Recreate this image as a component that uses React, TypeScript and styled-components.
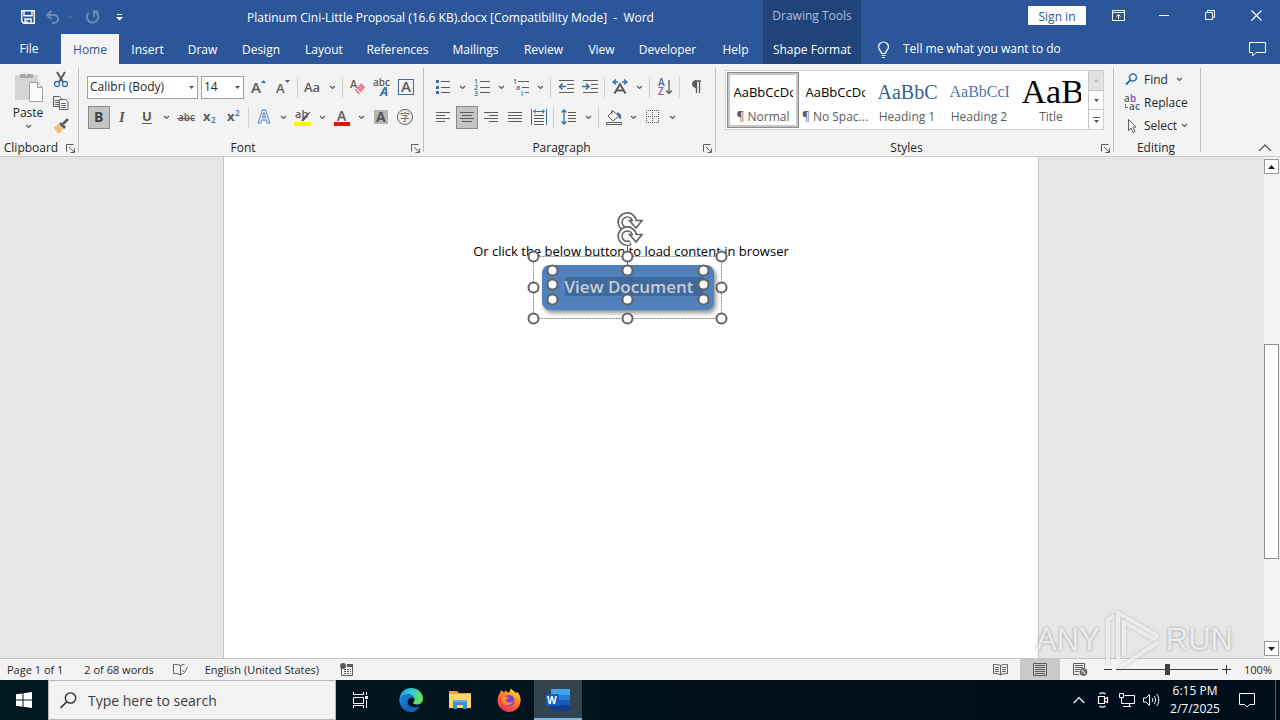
import React from 'react';
import styled, { createGlobalStyle, css } from 'styled-components';

const GlobalStyle = createGlobalStyle`
  *, *::before, *::after { box-sizing: border-box; }
  body { margin: 0; background: #e6e6e6; }
  button, input, select { font: inherit; color: inherit; margin: 0; }
  button { border: 0; padding: 0; background: none; }
  svg { display: block; flex: none; overflow: visible; }
`;

const blue = '#2b579a';
const ink = '#262626';
const accent = '#3a6ea8';
const grey = '#5c5c5c';

/* ---------- shell ---------- */
const Window = styled.div`
  display: flex;
  flex-direction: column;
  min-height: 100vh;
  font-family: 'Open Sans', 'Noto Sans', sans-serif;
  font-size: 12px;
  line-height: 16px;
  color: ${ink};
  position: relative;
`;

/* ---------- header ---------- */
const Header = styled.header`
  display: flex;
  height: 64px;
  background: ${blue};
  color: #fff;
`;
const HeaderBlock = styled.div<{ $grow?: boolean; $dark?: boolean }>`
  display: flex;
  flex-direction: column;
  flex: ${p => (p.$grow ? '1 1 auto' : '0 0 auto')};
  background: ${p => (p.$dark ? '#20437a' : 'transparent')};
`;
const TitleRow = styled.div<{ $end?: boolean }>`
  display: flex;
  align-items: center;
  height: 34px;
  justify-content: ${p => (p.$end ? 'flex-end' : 'flex-start')};
`;
const QuickAccess = styled.div`
  display: flex;
  align-items: center;
  width: 138px;
  padding-left: 20px;
`;
const QuickButton = styled.button<{ $dim?: boolean; $w?: number }>`
  display: grid;
  place-items: center;
  width: ${p => p.$w ?? 18}px;
  height: 24px;
  opacity: ${p => (p.$dim ? 0.3 : 1)};
`;
const DocTitle = styled.h1`
  flex: 1;
  margin: 0;
  font-size: 12px;
  font-weight: 400;
  line-height: 18px;
  padding-top: 2px;
  text-align: center;
  white-space: pre;
`;
const ContextLabel = styled.div`
  height: 34px;
  line-height: 32px;
  text-align: center;
  color: #a9bfe0;
`;
const TabRow = styled.nav`
  display: flex;
  height: 30px;
`;
const Tab = styled.button<{ $w: number; $active?: boolean }>`
  width: ${p => p.$w}px;
  height: 30px;
  padding-top: 2px;
  text-align: center;
  white-space: nowrap;
  ${p => p.$active && css`
    background: #f3f3f3;
    color: ${blue};
  `}
`;
const FileTab = styled(Tab)`
  margin-right: 3px;
  padding-top: 0;
`;
const SignIn = styled.button`
  width: 58px;
  height: 19px;
  margin-right: 9px;
  margin-bottom: 3px;
  border-radius: 1px;
  background: #fff;
  color: ${blue};
  line-height: 21px;
`;
const CaptionBar = styled.div`
  display: flex;
  align-items: center;
  padding-right: 1px;
`;
const CaptionButton = styled.button`
  display: grid;
  place-items: center;
  width: 46px;
  height: 30px;
  margin-bottom: 4px;
`;
const TellMe = styled.label`
  display: flex;
  align-items: center;
  flex: 1;
  gap: 12px;
  padding-left: 15px;
`;
const TellMeInput = styled.input`
  width: 200px;
  padding: 0;
  border: 0;
  outline: 0;
  background: transparent;
  &::placeholder { color: #fff; opacity: 1; }
`;
const CommentButton = styled.button`
  width: 46px;
  display: grid;
  place-items: center;
`;

/* ---------- ribbon ---------- */
const Ribbon = styled.section`
  display: flex;
  height: 93px;
  padding: 4px 0;
  background: #f3f3f3;
  border-bottom: 1px solid #c8c8c8;
`;
const Group = styled.div<{ $w: number }>`
  display: flex;
  flex-direction: column;
  width: ${p => p.$w}px;
  border-right: 1px solid #c0c0c0;
`;
const GroupBody = styled.div<{ $column?: boolean; $left?: number; $top?: number }>`
  display: flex;
  flex: 1;
  flex-direction: ${p => (p.$column ? 'column' : 'row')};
  padding-left: ${p => p.$left ?? 7}px;
  padding-top: ${p => p.$top ?? 0}px;
`;
const GroupFooter = styled.div`
  display: flex;
  align-items: center;
  height: 8px;
  padding-right: 2px;
`;
const GroupLabel = styled.span<{ $shift: boolean }>`
  flex: 1;
  padding-right: ${p => (p.$shift ? 4 : 0)}px;
  text-align: center;
`;
const Launcher = styled.button`
  width: 10px;
  height: 10px;
`;
const PasteButton = styled.button`
  display: flex;
  flex-direction: column;
  align-items: center;
  width: 42px;
  padding-top: 3px;
  gap: 3px;
`;
const ClipColumn = styled.div`
  display: flex;
  flex-direction: column;
  padding-left: 2px;
`;
const SmallButton = styled.button`
  display: grid;
  place-items: center;
  width: 20px;
  height: 23px;
`;
const ToolRow = styled.div`
  display: flex;
  align-items: center;
  height: 30px;
`;
const Tool = styled.button<{ $on?: boolean }>`
  display: grid;
  place-items: center;
  width: 22px;
  height: 23px;
  margin: 0 1px;
  border: 1px solid ${p => (p.$on ? '#8a8a8a' : 'transparent')};
  background: ${p => (p.$on ? '#c5c5c5' : 'transparent')};
`;
const ArrowButton = styled.button`
  display: grid;
  place-items: center;
  width: 15px;
  height: 23px;
`;
const Divider = styled.span`
  width: 1px;
  height: 21px;
  margin: 0 3px 0 2px;
  background: #d4d4d4;
`;
const Combo = styled.div<{ $w: number }>`
  display: grid;
  align-items: center;
  width: ${p => p.$w}px;
  height: 23px;
  margin-right: 3px;
  border: 1px solid #a0a0a0;
  background: #fff;
  & > * { grid-area: 1 / 1; }
  & > svg { justify-self: end; margin-right: 3px; pointer-events: none; }
`;
const ComboSelect = styled.select`
  width: 100%;
  height: 21px;
  padding: 0 2px;
  border: 0;
  outline: 0;
  appearance: none;
  background: transparent;
`;
const Gallery = styled.div`
  display: flex;
  width: 379px;
  height: 60px;
  margin-top: 2px;
  padding-left: 1px;
  border: 1px solid #d0d0d0;
  background: #fff;
`;
const StyleCard = styled.button<{ $on?: boolean }>`
  display: flex;
  flex-direction: column;
  align-items: center;
  width: 72px;
  height: 56px;
  margin-top: 1px;
  padding-top: 3px;
  color: ${grey};
  box-shadow: ${p => (p.$on ? 'inset 0 0 0 1px #8c8c8c, inset 0 0 0 3px #c6c6c6' : 'none')};
`;
const Sample = styled.span<{ $size: number; $serif?: boolean; $color?: string }>`
  display: block;
  width: 59px;
  height: 34px;
  line-height: 34px;
  overflow: hidden;
  white-space: nowrap;
  text-align: left;
  font-family: ${p => (p.$serif ? "'Liberation Serif', serif" : "'Open Sans', sans-serif")};
  font-size: ${p => p.$size}px;
  color: ${p => p.$color ?? '#000'};
`;
const GalleryScroll = styled.div`
  display: flex;
  flex-direction: column;
  width: 15px;
  margin-left: auto;
  border-left: 1px solid #c6c6c6;
`;
const GalleryArrow = styled.button<{ $off?: boolean }>`
  display: grid;
  place-items: center;
  flex: 1;
  background: ${p => (p.$off ? '#e1e1e1' : '#fff')};
  & + & { border-top: 1px solid #c6c6c6; }
`;
const EditButton = styled.button`
  display: flex;
  align-items: center;
  height: 23px;
  gap: 4px;
`;
const CollapseArea = styled.div`
  display: flex;
  flex: 1;
  justify-content: flex-end;
  align-items: flex-end;
  padding-right: 8px;
`;

/* ---------- document ---------- */
const Workspace = styled.main`
  display: flex;
  flex: 1;
  min-height: 501px;
  background: #e6e6e6;
`;
const Canvas = styled.div`
  display: flex;
  flex: 1;
  justify-content: center;
`;
const Sheet = styled.article`
  width: 816px;
  margin-right: 2px;
  padding-top: 85px;
  background: #fff;
  border: solid #c6c6c6;
  border-width: 0 1px;
  display: flex;
  flex-direction: column;
  align-items: center;
`;
const Paragraph = styled.p`
  margin: 0;
  color: #000;
  font-size: 13px;
  line-height: 18px;
`;
const ShapeFrame = styled.div`
  position: relative;
  margin-top: 5px;
  margin-right: 7px;
`;
const ShapeButton = styled.button`
  display: block;
  width: 172px;
  height: 45px;
  border-radius: 8px;
  background: #4f81bd;
  box-shadow: 2px 3px 4px rgba(0, 0, 0, 0.45);
`;
const ShapeText = styled.span`
  display: block;
  width: 138px;
  height: 19px;
  margin-left: 23px;
  margin-bottom: 3px;
  background: #40699c;
  color: #c9ced6;
  font-size: 17px;
  font-weight: 600;
  line-height: 20px;
  text-align: left;
`;
const SelectionOverlay = styled.svg`
  position: absolute;
  left: -16px;
  top: -60px;
  pointer-events: none;
`;
const ScrollBar = styled.div`
  display: flex;
  flex-direction: column;
  width: 16px;
  padding: 2px 1px 2px 0;
  background: #f3f3f3;
`;
const ScrollArrow = styled.button`
  display: grid;
  place-items: center;
  height: 15px;
  border: 1px solid #9a9a9a;
  background: #fff;
`;
const ScrollSpace = styled.div<{ $grow: number }>`
  flex: ${p => p.$grow} 0 0;
`;
const ScrollThumb = styled.div`
  flex: 214 0 0;
  border: 1px solid #8f8f8f;
  background: #fff;
`;

/* ---------- status bar ---------- */
const StatusBar = styled.footer`
  display: flex;
  align-items: center;
  height: 22px;
  padding: 0 8px 0 7px;
  border-top: 1px solid #c6c6c6;
  background: #f3f3f3;
  font-size: 11px;
`;
const StatusItem = styled.button<{ $gap: number }>`
  margin-right: ${p => p.$gap}px;
  white-space: nowrap;
`;
const StatusRight = styled.div`
  display: flex;
  align-items: center;
  margin-left: auto;
`;
const ViewButton = styled.button<{ $on?: boolean }>`
  display: grid;
  place-items: center;
  width: 40px;
  height: 21px;
  background: ${p => (p.$on ? '#c8c8c8' : 'transparent')};
`;
const ZoomButton = styled.button`
  display: grid;
  place-items: center;
  width: 16px;
  height: 20px;
`;
const ZoomSlider = styled.input`
  width: 102px;
  height: 20px;
  appearance: none;
  background: linear-gradient(#444, #444) center / 100% 1px no-repeat;
  &::-webkit-slider-thumb {
    appearance: none;
    width: 5px;
    height: 11px;
    background: #404040;
  }
`;
const ZoomValue = styled.button`
  width: 38px;
  text-align: right;
`;

/* ---------- taskbar ---------- */
const Taskbar = styled.footer`
  display: flex;
  height: 40px;
  background: linear-gradient(90deg, #011822, #000c1a);
  color: #fff;
`;
const TaskButton = styled.button<{ $on?: boolean; $w?: number }>`
  display: grid;
  place-items: center;
  width: ${p => p.$w ?? 48}px;
  margin-right: 1px;
  background: ${p => (p.$on ? '#33444f' : 'transparent')};
  border-bottom: 2px solid ${p => (p.$on ? '#76b9ed' : 'transparent')};
  border-top: 2px solid transparent;
`;
const SearchBox = styled.label`
  display: flex;
  align-items: center;
  width: 288px;
  padding-left: 11px;
  gap: 11px;
  border: 1px solid #b9b9b9;
  background: #f2f2f2;
  color: #1f1f1f;
  font-size: 14px;
`;
const SearchInput = styled.input`
  flex: 1;
  min-width: 0;
  padding: 2px 0 0;
  border: 0;
  outline: 0;
  background: transparent;
  &::placeholder { color: #3a3a3a; opacity: 1; }
`;
const Tray = styled.div`
  display: flex;
  align-items: center;
  margin-left: auto;
`;
const TrayButton = styled.button<{ $w?: number }>`
  display: grid;
  place-items: center;
  width: ${p => p.$w ?? 24}px;
  height: 40px;
`;
const Clock = styled.button`
  width: 64px;
  line-height: 18px;
  text-align: center;
`;
const DesktopEdge = styled.span`
  width: 5px;
  height: 40px;
  margin-left: 8px;
  border-left: 1px solid #4d5863;
`;
const Watermark = styled.div`
  position: absolute;
  right: 47px;
  bottom: 48px;
  display: flex;
  align-items: center;
  gap: 4px;
  pointer-events: none;
  font-family: 'Liberation Sans', sans-serif;
  font-size: 31px;
  line-height: 64px;
  color: rgba(255, 255, 255, 0.75);
  text-shadow: 0 0 3px rgba(0, 0, 0, 0.35);
`;
const WatermarkLogo = styled.svg`
  filter: drop-shadow(0 0 1px rgba(0, 0, 0, 0.3));
`;

/* ---------- icons ---------- */
type IconProps = { w?: number; h?: number; children: React.ReactNode };
const Icon = ({ w = 16, h = 16, children }: IconProps) => (
  <svg width={w} height={h} viewBox={`0 0 ${w} ${h}`} fill="none" stroke={grey} aria-hidden="true">
    {children}
  </svg>
);
const Glyph = ({ x = 0, y, size, fill = grey, weight = 400, family = 'Open Sans', italic, stroke = 'none', children }: {
  x?: number; y: number; size: number; fill?: string; weight?: number; family?: string; italic?: boolean; stroke?: string; children: string;
}) => (
  <text x={x} y={y} fontSize={size} fill={fill} stroke={stroke} fontWeight={weight} fontFamily={`'${family}', sans-serif`} fontStyle={italic ? 'italic' : 'normal'}>
    {children}
  </text>
);
const Chevron = () => (
  <Icon w={7} h={5}><path d="M1 1l2.500 2.500L6 1" strokeWidth="1.200" /></Icon>
);
const Caret = ({ color = '#555' }: { color?: string }) => (
  <Icon w={5} h={3}><path d="M0 0h5L2.500 3z" fill={color} stroke="none" /></Icon>
);
const LauncherIcon = () => (
  <Icon w={9} h={9}><path d="M.5 7.500V.5h7M3 3l5 5M8.500 4.500v4h-4" /></Icon>
);
const lines = (rows: [number, number, number][]) => (
  <path d={rows.map(([x, y, w]) => `M${x} ${y}.5h${w}`).join('')} />
);

const tabs = [
  { name: 'Home', w: 58, active: true },
  { name: 'Insert', w: 57 },
  { name: 'Draw', w: 53 },
  { name: 'Design', w: 64 },
  { name: 'Layout', w: 62 },
  { name: 'References', w: 85 },
  { name: 'Mailings', w: 71 },
  { name: 'Review', w: 65 },
  { name: 'View', w: 51 },
  { name: 'Developer', w: 81 },
  { name: 'Help', w: 55 },
];

const styleCards = [
  { sample: 'AaBbCcDc', name: '¶ Normal', size: 13, on: true },
  { sample: 'AaBbCcDc', name: '¶ No Spac...', size: 13 },
  { sample: 'AaBbC', name: 'Heading 1', size: 20, serif: true, color: '#365f91' },
  { sample: 'AaBbCcI', name: 'Heading 2', size: 16, serif: true, color: '#4f76a8' },
  { sample: 'AaB', name: 'Title', size: 34, serif: true },
];

const TitleBar = () => (
  <Header>
    <HeaderBlock>
      <TitleRow>
        <QuickAccess>
          <QuickButton aria-label="Save">
            <Icon w={14} h={14}><path d="M.7.7h12.600v12.600H2.700L.7 11.300zM3 .7v5h8v-5M4 13V9h6v4M6 10.500v2.500" stroke="#fff" strokeWidth="1.400" /></Icon>
          </QuickButton>
          <QuickButton aria-label="Undo" $dim $w={50}>
            <Icon w={28} h={14}>
              <path d="M5.500 1L1 5l4.500 4M1.500 5H8a4 4 0 010 8H6" stroke="#fff" strokeWidth="2" />
              <path d="M22 5.500l2.500 2.500L27 5.500" stroke="#fff" />
            </Icon>
          </QuickButton>
          <QuickButton aria-label="Repeat" $dim>
            <Icon w={14} h={14}><path d="M9.500 1.500A5.700 5.700 0 113.700 2.700M9 7V1.500h4.500" stroke="#fff" strokeWidth="2" /></Icon>
          </QuickButton>
          <QuickButton aria-label="Customize Quick Access Toolbar" $w={40}>
            <Icon w={7} h={7}><path d="M1 .5h5" stroke="#fff" /><path d="M0 3h7L3.500 6.500z" fill="#fff" stroke="none" /></Icon>
          </QuickButton>
        </QuickAccess>
        <DocTitle>{'Platinum Cini-Little Proposal (16.6 KB).docx [Compatibility Mode]  -  Word'}</DocTitle>
      </TitleRow>
      <TabRow>
        <FileTab $w={58}>File</FileTab>
        {tabs.map(t => <Tab key={t.name} $w={t.w} $active={t.active}>{t.name}</Tab>)}
      </TabRow>
    </HeaderBlock>
    <HeaderBlock $dark>
      <ContextLabel>Drawing Tools</ContextLabel>
      <Tab $w={98}>Shape Format</Tab>
    </HeaderBlock>
    <HeaderBlock $grow>
      <TitleRow $end>
        <SignIn>Sign in</SignIn>
        <CaptionBar>
          <CaptionButton aria-label="Ribbon display options">
            <Icon w={13} h={11}><path d="M.5.5h12v10H.5zM.5 2.500h12M6.500 9V4.500M4.500 6.500l2-2 2 2" stroke="#fff" /></Icon>
          </CaptionButton>
          <CaptionButton aria-label="Minimize"><Icon w={10} h={10}><path d="M0 5.500h10" stroke="#fff" /></Icon></CaptionButton>
          <CaptionButton aria-label="Restore">
            <Icon w={10} h={10}><path d="M.5 2.500h7v7h-7zM2.500 2.500v-2h7v7h-2" stroke="#fff" /></Icon>
          </CaptionButton>
          <CaptionButton aria-label="Close"><Icon w={11} h={11}><path d="M.5.5l10 10M10.500.5l-10 10" stroke="#fff" strokeWidth="1.200" /></Icon></CaptionButton>
        </CaptionBar>
      </TitleRow>
      <TabRow>
        <TellMe>
          <Icon w={15} h={17}><path d="M5.500 12.500c0-3-3-3.500-3-6.500a5 5 0 0110 0c0 3-3 3.500-3 6.500zM5.500 14.500h4M6 16.500h3" stroke="#fff" strokeWidth="1.200" /></Icon>
          <TellMeInput aria-label="Tell me what you want to do" placeholder="Tell me what you want to do" />
        </TellMe>
        <CommentButton aria-label="Comments">
          <Icon w={17} h={15}><path d="M.5.5h16v10H7l-3.500 3.500v-3.500h-3z" stroke="#fff" /></Icon>
        </CommentButton>
      </TabRow>
    </HeaderBlock>
  </Header>
);

const Footer = ({ label, launcher = true }: { label: string; launcher?: boolean }) => (
  <GroupFooter>
    <GroupLabel $shift={launcher}>{label}</GroupLabel>
    {launcher && <Launcher aria-label={`${label} settings`}><LauncherIcon /></Launcher>}
  </GroupFooter>
);
const More = ({ label }: { label: string }) => <ArrowButton aria-label={label}><Chevron /></ArrowButton>;

const ClipboardGroup = () => (
  <Group $w={79}>
    <GroupBody>
      <PasteButton>
        <Icon w={30} h={31}>
          <path d="M2 4h23v25H2z" fill="#d6d4d6" stroke="none" />
          <path d="M7 3h4a3 3 0 015 0h4v4H7z" fill="#a9a9a9" stroke="none" />
          <circle cx="13.500" cy="3" r="1.200" fill="#f3f3f3" stroke="none" />
          <path d="M16.500 11.500h8l5 5v14h-13zM24.500 11.500v5h5" fill="#fafafa" stroke="#a0a0a0" />
        </Icon>
        <span>Paste</span>
        <Chevron />
      </PasteButton>
      <ClipColumn>
        <SmallButton aria-label="Cut">
          <Icon>
            <path d="M4 0l6 10M12 0L6 10" strokeWidth="2" />
            <circle cx="4" cy="12" r="2.500" stroke={accent} strokeWidth="1.300" /><circle cx="12" cy="12" r="2.500" stroke={accent} strokeWidth="1.300" />
          </Icon>
        </SmallButton>
        <SmallButton aria-label="Copy">
          <Icon>
            <path d="M.5 1.500h6l2 2v8h-8zM2 5.500h4M2 7.500h4M2 9.500h4" />
            <path d="M6.500 4.500h6l2.500 2.500v7.500H6.500z" fill="#fff" /><path d="M8 8.500h5M8 10.500h5M8 12.500h5" stroke={accent} />
          </Icon>
        </SmallButton>
        <SmallButton aria-label="Format Painter">
          <Icon>
            <path d="M1 9l5-3 4 5-4 5C4 14 2 12 1 9z" fill="#f0c070" stroke="none" />
            <path d="M6 6l2-2 5 5-2 2z" fill={grey} stroke="none" /><path d="M10 6l5-5" strokeWidth="2.500" />
          </Icon>
        </SmallButton>
      </ClipColumn>
    </GroupBody>
    <Footer label="Clipboard" />
  </Group>
);

const FontGroup = () => (
  <Group $w={345}>
    <GroupBody $column $left={8} $top={4}>
      <ToolRow>
        <Combo $w={111}>
          <ComboSelect aria-label="Font"><option>Calibri (Body)</option></ComboSelect><Caret />
        </Combo>
        <Combo $w={43}>
          <ComboSelect aria-label="Font size"><option>14</option></ComboSelect><Caret />
        </Combo>
        <Tool aria-label="Increase font size"><Icon><Glyph x={0} y={14} size={15} weight={600}>A</Glyph><path d="M10 4l2.500-3L15 4z" fill={accent} stroke="none" /></Icon></Tool>
        <Tool aria-label="Decrease font size"><Icon><Glyph x={1} y={14} size={13} weight={600}>A</Glyph><path d="M10 1h5l-2.500 3z" fill={grey} stroke="none" /></Icon></Tool>
        <Divider />
        <Tool aria-label="Change case"><Icon w={18}><Glyph y={13} size={13} weight={600}>Aa</Glyph></Icon></Tool>
        <More label="Case options" />
        <Divider />
        <Tool aria-label="Clear formatting">
          <Icon><Glyph x={0} y={9} size={11} weight={600}>A</Glyph><path d="M11 4l4.500 4-6.500 7.500L4.500 11z" fill="#e8879b" stroke="none" /><path d="M5.500 9l5.500 5" stroke="#fff" /></Icon>
        </Tool>
        <Tool aria-label="Phonetic guide"><Icon><Glyph x={-1} y={7} size={10} weight={600}>abc</Glyph><Glyph x={6} y={17} size={13} weight={700} italic fill={accent}>A</Glyph></Icon></Tool>
        <Tool aria-label="Character border"><Icon><rect x=".5" y=".5" width="15" height="15" stroke={accent} /><Glyph x={3} y={13} size={15} weight={600}>A</Glyph></Icon></Tool>
      </ToolRow>
      <ToolRow>
        <Tool $on aria-label="Bold"><Icon><Glyph x={3} y={13} size={14} weight={700} fill="#444">B</Glyph></Icon></Tool>
        <Tool aria-label="Italic"><Icon><Glyph x={4} y={13} size={15} family="Liberation Serif" weight={700} italic>I</Glyph></Icon></Tool>
        <Tool aria-label="Underline"><Icon><Glyph x={3} y={12} size={13} weight={700}>U</Glyph><path d="M3 14.500h10" /></Icon></Tool>
        <More label="Underline options" />
        <Tool aria-label="Strikethrough"><Icon w={18}><Glyph x={1} y={12} size={10} weight={600}>abc</Glyph><path d="M0 9.500h18" /></Icon></Tool>
        <Tool aria-label="Subscript"><Icon><Glyph x={1} y={12} size={13} weight={700}>x</Glyph><Glyph x={9} y={14} size={8} weight={600} fill={accent}>2</Glyph></Icon></Tool>
        <Tool aria-label="Superscript"><Icon><Glyph x={1} y={12} size={13} weight={700}>x</Glyph><Glyph x={9} y={7} size={8} weight={600} fill={accent}>2</Glyph></Icon></Tool>
        <Divider />
        <Tool aria-label="Text effects"><Icon><Glyph x={2} y={14} size={17} weight={700} fill="#f3f8ff" stroke="#5b8fd0">A</Glyph></Icon></Tool>
        <More label="Text effects options" />
        <Tool aria-label="Highlight">
          <Icon w={18}><rect x="0" y="13" width="17" height="4" fill="#fff200" stroke="none" /><Glyph x={1} y={9} size={11} weight={600}>ab</Glyph><path d="M16 3l-6 8-2 1 1-3z" fill={grey} /></Icon>
        </Tool>
        <More label="Highlight options" />
        <Tool aria-label="Font color"><Icon><Glyph x={3} y={12} size={14} weight={600}>A</Glyph><rect x="0" y="13" width="16" height="4" fill="#e81010" stroke="none" /></Icon></Tool>
        <More label="Font color options" />
        <Tool aria-label="Character shading"><Icon><rect x="1" y="1" width="14" height="14" fill="#b5b5b5" stroke="none" /><Glyph x={3} y={13} size={14} weight={700} fill="#555">A</Glyph></Icon></Tool>
        <Tool aria-label="Enclose characters"><Icon><circle cx="8" cy="8" r="7.500" /><Glyph x={3} y={12} size={10} family="Noto Sans CJK SC">字</Glyph></Icon></Tool>
      </ToolRow>
    </GroupBody>
    <Footer label="Font" />
  </Group>
);

const ParagraphGroup = () => (
  <Group $w={292}>
    <GroupBody $column $top={4}>
      <ToolRow>
        <Tool aria-label="Bullets"><Icon>{lines([[6, 2, 9], [6, 8, 9], [6, 13, 9]])}<path d="M1 1h3v3H1zM1 7h3v3H1zM1 12h3v3H1z" fill={accent} stroke="none" /></Icon></Tool>
        <More label="Bullet options" />
        <Tool aria-label="Numbering"><Icon>{lines([[6, 2, 10], [6, 8, 10], [6, 13, 10]])}<Glyph y={5} size={7} weight={600} fill={accent}>1</Glyph><Glyph y={11} size={7} weight={600} fill={accent}>2</Glyph><Glyph y={17} size={7} weight={600} fill={accent}>3</Glyph></Icon></Tool>
        <More label="Numbering options" />
        <Tool aria-label="Multilevel list"><Icon>{lines([[5, 2, 11], [9, 8, 7], [12, 13, 4]])}<Glyph y={5} size={7} weight={600} fill={accent}>1</Glyph><Glyph x={3} y={11} size={7} weight={600} fill={accent}>a</Glyph><Glyph x={8} y={17} size={7} weight={600} fill={accent}>i</Glyph></Icon></Tool>
        <More label="Multilevel options" />
        <Divider />
        <Tool aria-label="Decrease indent"><Icon>{lines([[1, 1, 15], [9, 5, 7], [9, 9, 7], [1, 13, 15]])}<path d="M8 7.500H2M4.500 4.500l-3 3 3 3" stroke={accent} strokeWidth="1.600" /></Icon></Tool>
        <Tool aria-label="Increase indent"><Icon>{lines([[1, 1, 15], [9, 5, 7], [9, 9, 7], [1, 13, 15]])}<path d="M0 7.500h6M4 4.500l3 3-3 3" stroke={accent} strokeWidth="1.600" /></Icon></Tool>
        <Divider />
        <Tool aria-label="Asian layout"><Icon><path d="M4 .5L1 3l3 2.500M12 .5L15 3l-3 2.500M1 3h5M15 3h-5" stroke={accent} strokeWidth="1.300" /><path d="M2.500 14.500L8 5l5.500 9.500M4.500 11.500h7" strokeWidth="2" /></Icon></Tool>
        <More label="Asian layout options" />
        <Divider />
        <Tool aria-label="Sort"><Icon><Glyph x={1} y={7} size={10} weight={600} fill={accent}>A</Glyph><Glyph x={1} y={16} size={10} weight={600} fill="#8a4fb0">Z</Glyph><path d="M12 1v13M9 11.500l3 3 3-3" strokeWidth="1.300" /></Icon></Tool>
        <Divider />
        <Tool aria-label="Show marks"><Icon><path d="M8 2h6M9.500 2v12M12.500 2v12" strokeWidth="1.300" /><path d="M9 1.500v7a3.500 3.500 0 010-7z" fill={grey} /></Icon></Tool>
      </ToolRow>
      <ToolRow>
        <Tool aria-label="Align left"><Icon>{lines([[1, 3, 14], [1, 6, 9], [1, 9, 14], [1, 12, 9]])}</Icon></Tool>
        <Tool $on aria-label="Center"><Icon>{lines([[1, 3, 14], [3, 6, 10], [1, 9, 14], [3, 12, 10]])}</Icon></Tool>
        <Tool aria-label="Align right"><Icon>{lines([[1, 3, 14], [6, 6, 9], [1, 9, 14], [6, 12, 9]])}</Icon></Tool>
        <Tool aria-label="Justify"><Icon>{lines([[1, 3, 14], [1, 6, 14], [1, 9, 14], [1, 12, 14]])}</Icon></Tool>
        <Tool aria-label="Distribute"><Icon><path d="M.5 0v16M15.500 0v16M2.500 2.500h11M5 .5l-2.500 2L5 4.500M11 .5l2.500 2-2.500 2" stroke={accent} />{lines([[3, 6, 10], [3, 9, 10], [3, 12, 10], [3, 15, 10]])}</Icon></Tool>
        <Divider />
        <Tool aria-label="Line spacing"><Icon>{lines([[7, 3, 8], [7, 6, 8], [7, 9, 8], [7, 12, 8]])}<path d="M3 1v14M.5 3.500L3 1l2.500 2.500M.5 12.500L3 15l2.500-2.500" stroke={accent} strokeWidth="1.300" /></Icon></Tool>
        <More label="Line spacing options" />
        <Divider />
        <Tool aria-label="Shading"><Icon><path d="M7 2l6 5-6 5-5-5zM6 1v4" /><path d="M11 4c3 0 4 2 3.500 6l-2-3z" fill={accent} stroke={accent} /><path d="M.5 13.500h15v2H.5z" fill="#fff" /></Icon></Tool>
        <More label="Shading options" />
        <Tool aria-label="Borders"><Icon><path d="M1.500 1v13M7.500 1v13M13.500 1v13M1 1.500h13M1 7.500h13M1 13.500h13" strokeDasharray="1 1" /></Icon></Tool>
        <More label="Border options" />
      </ToolRow>
    </GroupBody>
    <Footer label="Paragraph" />
  </Group>
);

const StylesGroup = () => (
  <Group $w={398}>
    <GroupBody $left={9}>
      <Gallery>
        {styleCards.map(s => (
          <StyleCard key={s.name} $on={s.on}>
            <Sample $size={s.size} $serif={s.serif} $color={s.color}>{s.sample}</Sample>
            <span>{s.name}</span>
          </StyleCard>
        ))}
        <GalleryScroll>
          <GalleryArrow $off aria-label="Scroll styles up"><Icon w={5} h={3}><path d="M0 3h5L2.500 0z" fill="#b5b5b5" stroke="none" /></Icon></GalleryArrow>
          <GalleryArrow aria-label="Scroll styles down"><Caret /></GalleryArrow>
          <GalleryArrow aria-label="More styles"><Icon w={7} h={6}><path d="M0 .5h7" /><path d="M1 3h5L3.500 6z" fill="#555" stroke="none" /></Icon></GalleryArrow>
        </GalleryScroll>
      </Gallery>
    </GroupBody>
    <Footer label="Styles" />
  </Group>
);

const EditingGroup = () => (
  <Group $w={87}>
    <GroupBody $column $left={10}>
      <EditButton>
        <Icon><circle cx="9" cy="5.500" r="3.500" stroke={accent} strokeWidth="1.600" /><path d="M6.500 8L2 12.500" stroke={accent} strokeWidth="2" /></Icon>
        <span>Find</span>
        <ArrowButton as="span"><Chevron /></ArrowButton>
      </EditButton>
      <EditButton>
        <Icon><Glyph x={0} y={7} size={10} weight={600}>a</Glyph><Glyph x={6} y={7} size={10} weight={600} fill="#8a4fb0">b</Glyph><Glyph x={5} y={15} size={10} weight={600}>a</Glyph><Glyph x={11} y={15} size={10} weight={600} fill={accent}>c</Glyph><path d="M1.500 9v3.500H4" stroke={accent} /></Icon>
        <span>Replace</span>
      </EditButton>
      <EditButton>
        <Icon><path d="M4.500 1.500v11l2.500-2.500 2 4.500 2-1-2-4.500h3z" fill="#fff" /></Icon>
        <span>Select</span>
        <Chevron />
      </EditButton>
    </GroupBody>
    <Footer label="Editing" launcher={false} />
  </Group>
);

const handleRing = (x: number, y: number, r: number) => (
  <circle key={`${x}-${y}`} cx={x} cy={y} r={r} fill="#fff" stroke="#636363" strokeWidth="2" />
);
const rotateHandle = (y: number) => (
  <g key={y} transform={`translate(0 ${y})`} fill="none">
    <path d="M104.500 6.500A7.200 7.200 0 11108.500 0" stroke="#636363" strokeWidth="5.500" />
    <path d="M103.500 -1.500h12.500l-6 7.500z" fill="#fff" stroke="#636363" strokeWidth="1.600" />
    <path d="M103.700 7A7.200 7.200 0 11108.500 0.500" stroke="#fff" strokeWidth="2.400" />
  </g>
);

const DocumentArea = () => (
  <Workspace>
    <Canvas>
      <Sheet>
        <Paragraph>Or click the below button to load content in browser</Paragraph>
        <ShapeFrame>
          <ShapeButton><ShapeText>View Document</ShapeText></ShapeButton>
          <SelectionOverlay width="220" height="130" viewBox="0 0 220 130">
            <rect x="7.500" y="51.500" width="188" height="62" fill="none" stroke="#8a8a8a" strokeDasharray="2 1" />
            <rect x="26.500" y="65.500" width="151" height="29" fill="none" stroke="#5c6f8c" strokeDasharray="2 1" />
            <path d="M101.500 36v30" stroke="#636363" />
            {[7, 101, 195].flatMap(x => [51, 82, 113].filter(y => !(x === 101 && y === 82)).map(y => handleRing(x + 0.5, y + 0.5, 5)))}
            {[26, 101, 177].flatMap(x => [65, 79, 94].filter(y => !(x === 101 && y === 79)).map(y => handleRing(x + 0.5, y + 0.5, 5)))}
            {[17, 31].map(rotateHandle)}
          </SelectionOverlay>
        </ShapeFrame>
      </Sheet>
    </Canvas>
    <ScrollBar>
      <ScrollArrow aria-label="Scroll up"><Icon w={7} h={4}><path d="M0 4h7L3.500 0z" fill="#222" stroke="none" /></Icon></ScrollArrow>
      <ScrollSpace $grow={171} />
      <ScrollThumb />
      <ScrollSpace $grow={82} />
      <ScrollArrow aria-label="Scroll down"><Icon w={7} h={4}><path d="M0 0h7L3.500 4z" fill="#222" stroke="none" /></Icon></ScrollArrow>
    </ScrollBar>
  </Workspace>
);

const Status = () => (
  <StatusBar>
    <StatusItem $gap={21}>Page 1 of 1</StatusItem>
    <StatusItem $gap={19}>2 of 68 words</StatusItem>
    <StatusItem $gap={17} aria-label="Proofing">
      <Icon w={15} h={14}><path d="M7.500 2.500c-2-1-4-1-7-1v9c3 0 5 0 7 1.500V2.500c2-1 3-1 4-1M7.500 12c1-1 2-1.500 3-1.500M9 7l2.500 2.500L14.500 4" /></Icon>
    </StatusItem>
    <StatusItem $gap={21}>English (United States)</StatusItem>
    <StatusItem $gap={0} aria-label="Macro recording">
      <Icon w={14} h={13}><path d="M1.500 5v7.500h11v-10H7" /><path d="M4 6.500h7M4 8.500h7M4 10.500h7" strokeDasharray="2 1" /><path d="M7 1h6v3H7z" fill={grey} stroke="none" /><circle cx="3" cy="3" r="3" fill={grey} stroke="none" /></Icon>
    </StatusItem>
    <StatusRight>
      <ViewButton aria-label="Read mode">
        <Icon w={15} h={13}><path d="M7.500 2.500c-2-1-4-1-7-1v9c3 0 5 0 7 1.500 2-1.500 4-1.500 7-1.500v-9c-3 0-5 0-7 1zV12M2 4.500h4M2 6.500h4M2 8.500h4M9 4.500h4M9 6.500h4M9 8.500h4" /></Icon>
      </ViewButton>
      <ViewButton $on aria-label="Print layout"><Icon w={14} h={13}><path d="M.5.5h13v12H.5zM2 2.500h10M2 4.500h10M2 6.500h10M2 8.500h10M2 10.500h10" /></Icon></ViewButton>
      <ViewButton aria-label="Web layout">
        <Icon w={15} h={13}><path d="M6 11.500H.5V.5h11V5M2 2.500h8M2 4.500h8M2 6.500h5M2 8.500h4" /><circle cx="10.500" cy="9" r="3.500" fill="#777" /><path d="M8.500 7.500l2 1 1.500 2.500" stroke="#fff" /></Icon>
      </ViewButton>
      <ZoomButton aria-label="Zoom out"><Icon w={9} h={9}><path d="M0 4.500h8" stroke="#333" /></Icon></ZoomButton>
      <ZoomSlider type="range" min={0} max={200} defaultValue={100} aria-label="Zoom" />
      <ZoomButton aria-label="Zoom in"><Icon w={9} h={9}><path d="M0 4.500h9M4.500 0v9" stroke="#333" /></Icon></ZoomButton>
      <ZoomValue>100%</ZoomValue>
    </StatusRight>
  </StatusBar>
);

const TaskbarArea = () => (
  <Taskbar>
    <TaskButton aria-label="Start" $w={47}>
      <Icon><path d="M0 2.300L6.500 1.400V7.600H0zM7.500 1.200L16 0v7.600H7.500zM0 8.500h6.500v6.200L0 13.800zM7.500 8.500H16V16l-8.500-1.200z" fill="#fff" stroke="none" /></Icon>
    </TaskButton>
    <SearchBox>
      <Icon w={17} h={17}><circle cx="10.500" cy="6" r="5.200" stroke="#222" strokeWidth="1.300" /><path d="M6.500 10L.5 16" stroke="#222" strokeWidth="1.500" /></Icon>
      <SearchInput aria-label="Type here to search" placeholder="Type here to search" />
    </SearchBox>
    <TaskButton aria-label="Task view" $w={50}>
      <Icon w={17} h={16}><path d="M.5 0v2.500h10V0M.5 5.500h10v6H.5zM.5 16v-2.500h10V16M13.500 0v3M13.500 8v8" stroke="#fff" /><path d="M12 4h3v3h-3z" fill="#fff" stroke="none" /></Icon>
    </TaskButton>
    <TaskButton aria-label="Microsoft Edge">
      <svg width="24" height="24" viewBox="0 0 24 24" aria-hidden="true">
        <defs>
          <linearGradient id="edgeTop" x1="0" y1="0" x2="1" y2="0.300"><stop offset="0" stopColor="#1b9de2" /><stop offset="0.500" stopColor="#30c6d8" /><stop offset="1" stopColor="#66e05a" /></linearGradient>
          <linearGradient id="edgeLow" x1="0" y1="0" x2="1" y2="1"><stop offset="0" stopColor="#1b88dd" /><stop offset="1" stopColor="#0c4a9c" /></linearGradient>
        </defs>
        <path d="M.5 11C1 4.500 6 0 12 0c7 0 12 5 12 10.500 0 4-3 6-6 6-2.500 0-4-1-4-1.500 0-.7 1.500-1 1.500-3.500C15.500 9 12.500 6.500 9 6.500c-4 0-7 2-8.500 4.500z" fill="url(#edgeTop)" />
        <path d="M.3 11C1.500 8.500 5 6.500 9 6.500c3 0 5.500 2 6 4-4-2-6.500 1-6.500 4 0 4.500 6 6.500 12 4C18.500 22 15.500 24 12 24 5 24 0 18 .3 11z" fill="url(#edgeLow)" />
        <path d="M9 13c-1.500 5 5 8 11.500 5.500C18.500 22 15 24 12 24c-5-2-6-8-3-11z" fill="#1565b8" />
      </svg>
    </TaskButton>
    <TaskButton aria-label="File Explorer">
      <svg width="22" height="20" viewBox="0 0 22 20" aria-hidden="true">
        <path d="M0 1h8l2 2h12v5H0z" fill="#e8a33a" /><path d="M0 4h22v14H0z" fill="#fbd66b" />
        <path d="M4 10h14v9h-4v-4H8v4H4z" fill="#3a8fd0" /><path d="M4 10h14v2H4z" fill="#5ab0e8" />
      </svg>
    </TaskButton>
    <TaskButton aria-label="Firefox">
      <svg width="24" height="24" viewBox="0 0 24 24" aria-hidden="true">
        <defs><linearGradient id="fox" x1="0.800" y1="0" x2="0.200" y2="1"><stop offset="0" stopColor="#ffe226" /><stop offset="0.450" stopColor="#ff7a2a" /><stop offset="1" stopColor="#e6215e" /></linearGradient></defs>
        <path d="M3 5l1-3 3 2.500 2-2.500 1 2.500c2 0 3-.5 3.500-4C16 2 18 4 19 5l1.500-1C23 7 24 10 23.500 13.500 23 19.500 18 24 12 24S.5 19 .5 12.500C.5 9.500 1.500 7 3 5z" fill="url(#fox)" />
        <circle cx="12" cy="12.500" r="5.500" fill="#7a42d8" /><path d="M5 9c3-1 5 0 7 0-1 2-3 2-3 4 2 2 5 2 7 0-1 5-9 6-11 0-1-2-1-3 0-4z" fill="#ff8a2a" />
      </svg>
    </TaskButton>
    <TaskButton $on aria-label="Word">
      <svg width="24" height="22" viewBox="0 0 24 22" aria-hidden="true">
        <path d="M5 0h19v6H5z" fill="#41a5ee" /><path d="M5 6h19v5H5z" fill="#2b7cd3" /><path d="M5 11h19v5H5z" fill="#185abd" /><path d="M5 16h19v6H5z" fill="#103f91" />
        <rect x="0" y="5" width="13" height="12" rx="1" fill="#185abd" /><Glyph x={1} y={15} size={10} weight={700} fill="#fff">W</Glyph>
      </svg>
    </TaskButton>
    <Tray>
      <TrayButton aria-label="Show hidden icons"><Icon w={12} h={8}><path d="M.7 7L6 1.500 11.300 7" stroke="#fff" strokeWidth="1.200" /></Icon></TrayButton>
      <TrayButton aria-label="Meet now"><Icon w={14} h={16}><path d="M2.500 4.500h6v7h-6zM8.500 7l3-1.500v5L8.500 9M3.500 2c2-1.500 4-1.500 6 0M3.500 14c2 1.500 4 1.500 6 0" stroke="#fff" strokeWidth="1.200" /></Icon></TrayButton>
      <TrayButton aria-label="Network"><Icon w={16} h={14}><path d="M5.500 2.500h10v8h-10M4 13.500h8M10.500 10.500v3M.5.5h4v4h-4zM2.500 4.500v6h3" stroke="#fff" /></Icon></TrayButton>
      <TrayButton aria-label="Volume"><Icon w={17} h={14}><path d="M.5 5h2.500L6.500 1.500v11L3 9H.5zM9 5c1 1 1 3 0 4M11 3c2 2 2 6 0 8M13.500 1c3 3 3 9 0 12" stroke="#fff" /></Icon></TrayButton>
      <Clock>6:15 PM<br />2/7/2025</Clock>
      <TrayButton aria-label="Notifications" $w={40}><Icon w={16} h={15}><path d="M.5.5h15v11h-5L8 14l-2.500-2.500h-5z" stroke="#fff" /></Icon></TrayButton>
      <DesktopEdge />
    </Tray>
  </Taskbar>
);

export default function App() {
  return (
    <Window>
      <GlobalStyle />
      <TitleBar />
      <Ribbon>
        <ClipboardGroup />
        <FontGroup />
        <ParagraphGroup />
        <StylesGroup />
        <EditingGroup />
        <CollapseArea>
          <button aria-label="Collapse the ribbon"><Icon w={14} h={9}><path d="M1 8l6-6 6 6" strokeWidth="1.300" /></Icon></button>
        </CollapseArea>
      </Ribbon>
      <DocumentArea />
      <Status />
      <TaskbarArea />
      <Watermark aria-hidden="true">
        <span>ANY</span>
        <WatermarkLogo width="58" height="64" viewBox="0 0 58 64" fill="none" stroke="rgba(255,255,255,.7)" strokeWidth="4">
          <path d="M4 55V12l5-4M14 50V5l39 22.500L50 31 20 14v32M16 59l37-24" strokeLinejoin="round" strokeLinecap="round" />
        </WatermarkLogo>
        <span>RUN</span>
      </Watermark>
    </Window>
  );
}
